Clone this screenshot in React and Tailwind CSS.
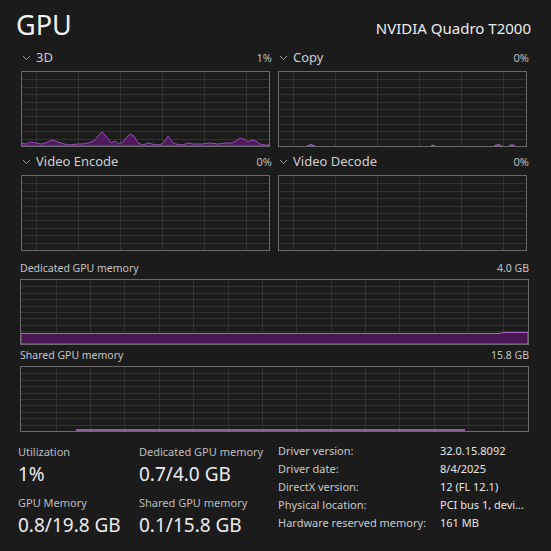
const font = { fontFamily: '"Noto Sans", "Open Sans", sans-serif' };

function Grid({ w, h, cols, offset, rows }) {
  const v = [];
  for (let x = offset; x < w; x += cols) v.push(x);
  const hs = [];
  for (let i = 1; i < rows; i++) hs.push((h / rows) * i);
  return (
    <g stroke="#333333" strokeWidth="1">
      {v.map((x) => (
        <line key={"v" + x} x1={Math.round(x) + 0.5} y1="0" x2={Math.round(x) + 0.5} y2={h} />
      ))}
      {hs.map((y) => (
        <line key={"h" + y} x1="0" y1={Math.round(y) + 0.5} x2={w} y2={Math.round(y) + 0.5} />
      ))}
    </g>
  );
}

function Graph({ w, h, cols, offset, children }) {
  return (
    <div className="border border-[#6a6a6a] bg-[#1b1b1b]" style={{ width: w, height: h }}>
      <svg width={w - 2} height={h - 2} viewBox={`0 0 ${w - 2} ${h - 2}`} className="block">
        <Grid w={w - 2} h={h - 2} cols={cols} offset={offset} rows={10} />
        {children}
      </svg>
    </div>
  );
}

// x in graph pixels (247 wide), y from top (74 tall)
const spikes3d = [
  [0, 74], [0, 71], [4, 72], [8, 70], [14, 71], [20, 72], [26, 70], [30, 68], [36, 70], [42, 72],
  [48, 73], [54, 72], [60, 72], [66, 71], [72, 69], [76, 64], [80, 60], [84, 64], [89, 71],
  [93, 69], [97, 72], [101, 70], [104, 66], [108, 62], [112, 64], [116, 71], [121, 73],
  [126, 71], [130, 72], [135, 73], [140, 72], [143, 69], [146, 64], [150, 70], [154, 72],
  [160, 73], [166, 71], [172, 72], [180, 72], [188, 71], [196, 72], [204, 71], [210, 71],
  [214, 69], [218, 66], [222, 67], [226, 70], [230, 68], [234, 69], [238, 72], [242, 73], [247, 73], [247, 74],
];

function Spikes3D() {
  const pts = spikes3d.map(([x, y]) => `${x},${y}`).join(" ");
  return <polygon points={pts} fill="#4f1a5c" stroke="#9a48b8" strokeWidth="1" strokeLinejoin="round" />;
}

function CopyBumps() {
  return (
    <g fill="#6a2a7a" stroke="#a45cc0" strokeWidth="1">
      <path d="M28,74 Q32,71 36,74 Z" />
      <path d="M152,74 Q154,72 156,74 Z" />
      <path d="M215,74 Q219,71 223,74 Z" />
      <path d="M230,74 Q233,71 236,74 Z" />
    </g>
  );
}

function Chevron() {
  return (
    <svg width="9" height="6" viewBox="0 0 9 6" className="mr-[5px]">
      <path d="M1 1 L4.5 4.5 L8 1" fill="none" stroke="#9a9a9a" strokeWidth="1" />
    </svg>
  );
}

function Engine({ name, pct, children }) {
  return (
    <div className="flex flex-col">
      <div className="flex items-center justify-between h-[16px] mb-[5px] -mr-[2px] text-[13px] text-[#cfcfcf]">
        <div className="flex items-center pl-[1px]">
          <Chevron />
          <span>{name}</span>
        </div>
        <span className="text-[11px] text-[#bdbdbd]">{pct}</span>
      </div>
      <Graph w={249} h={76} cols={42} offset={13.5}>
        {children}
      </Graph>
    </div>
  );
}

function MemBlock({ name, size, children }) {
  return (
    <div className="flex flex-col">
      <div className="flex items-center justify-between h-[14px] mb-[3px] text-[10.5px] text-[#c4c4c4]">
        <span>{name}</span>
        <span>{size}</span>
      </div>
      <Graph w={509} h={66} cols={34.4} offset={34.5}>
        {children}
      </Graph>
    </div>
  );
}

function Stat({ label, value }) {
  return (
    <div className="flex flex-col">
      <span className="text-[11px] leading-[16px] text-[#bdbdbd] whitespace-nowrap">{label}</span>
      <span className="text-[19px] leading-[28px] text-[#ececec] whitespace-nowrap">{value}</span>
    </div>
  );
}

const info = [
  ["Driver version:", "32.0.15.8092"],
  ["Driver date:", "8/4/2025"],
  ["DirectX version:", "12 (FL 12.1)"],
  ["Physical location:", "PCI bus 1, devi..."],
  ["Hardware reserved memory:", "161 MB"],
];

export default function App() {
  return (
    <div className="w-[551px] h-[551px] bg-[#1b1b1b] overflow-hidden pl-[21px] pr-[21px]" style={font}>
      <div className="flex items-end justify-between pt-[4px] h-[42px] -ml-[5px] -mr-[1px]">
        <span className="text-[27px] leading-[34px] text-[#f2f2f2]">GPU</span>
        <span className="text-[15px] leading-[20px] text-[#ededed] mb-[4px]">NVIDIA Quadro T2000</span>
      </div>

      <div className="grid grid-cols-[249px_249px] gap-x-[8px] gap-y-[7px] mt-[8px]">
        <Engine name="3D" pct="1%">
          <Spikes3D />
        </Engine>
        <Engine name="Copy" pct="0%">
          <CopyBumps />
        </Engine>
        <Engine name="Video Encode" pct="0%" />
        <Engine name="Video Decode" pct="0%" />
      </div>

      <div className="flex flex-col gap-[4px] mt-[11px] -ml-[1px] w-[509px]">
        <MemBlock name="Dedicated GPU memory" size="4.0 GB">
          <polygon points="0,53.5 478,53.5 483,52.5 507,52.5 507,64 0,64" fill="#4a1553" stroke="#a864c0" strokeWidth="1" />
        </MemBlock>
        <MemBlock name="Shared GPU memory" size="15.8 GB">
          <line x1="55" y1="63" x2="444" y2="63" stroke="#b078c8" strokeWidth="1.5" />
        </MemBlock>
      </div>

      <div className="flex mt-[12px] -ml-[3px]">
        <div className="flex flex-col w-[121px]">
          <Stat label="Utilization" value="1%" />
          <div className="mt-[7px]">
            <Stat label="GPU Memory" value="0.8/19.8 GB" />
          </div>
        </div>
        <div className="flex flex-col w-[139px]">
          <Stat label="Dedicated GPU memory" value="0.7/4.0 GB" />
          <div className="mt-[7px]">
            <Stat label="Shared GPU memory" value="0.1/15.8 GB" />
          </div>
        </div>
        <div className="flex flex-col -mt-[2px] text-[11px] leading-[18px] text-[#c8c8c8] whitespace-nowrap">
          {info.map(([k, v]) => (
            <div key={k} className="flex">
              <span className="w-[162px]">{k}</span>
              <span className="text-[#e6e6e6]">{v}</span>
            </div>
          ))}
        </div>
      </div>
    </div>
  );
}
